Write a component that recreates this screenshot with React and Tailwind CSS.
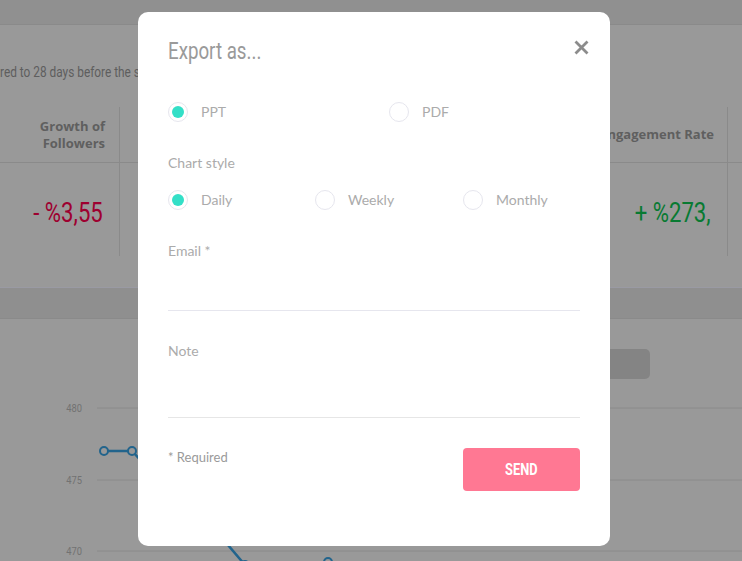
import React from "react";

function Radio({ checked, label, width }) {
  return (
    <div className="flex items-center h-[20px]" style={{ width }}>
      <span className="flex h-[20px] w-[20px] shrink-0 items-center justify-center rounded-full border border-[#e6e6ee] bg-white">
        {checked && <span className="h-[12px] w-[12px] rounded-full bg-[#33dfc7]" />}
      </span>
      <span className="ml-[13px] text-[14px] leading-[20px] text-[#ababab]">{label}</span>
    </div>
  );
}

export default function App() {
  const cond = "font-['Roboto',sans-serif]";
  const head = "font-['Open_Sans',sans-serif]";
  const pts = [
    [104, 72], [132, 72], [160, 102], [188, 128], [216, 152], [245, 186], [272, 196], [300, 192], [328, 183], [356, 200], [384, 215],
  ];
  const d = pts.map((p, i) => (i ? "L" : "M") + p[0] + " " + p[1]).join(" ");
  return (
    <div className="relative h-[561px] w-[742px] overflow-hidden bg-[#999999] font-['Lato',sans-serif]">
      {/* top bar */}
      <div className="h-[25px] border-b border-[#8a8a8a] bg-[#909090]" />
      {/* subtitle */}
      <div className={`mt-[38px] h-[18px] whitespace-nowrap text-[15px] leading-[18px] text-[#5e5e5e] ${cond}`}>
        <span className="inline-block origin-left scale-x-[0.79]">red to 28 days before the selected period</span>
      </div>
      {/* table */}
      <div className="mt-[26px] flex">
        <div className="w-[120px] border-r border-[#8a8a8a]">
          <div className={`flex h-[56px] items-center justify-end border-b border-[#8a8a8a] pr-[14px] text-right text-[13px] font-bold leading-[17px] text-[#5f5f5f] ${head}`}>
            Growth of<br />Followers
          </div>
          <div className={`flex h-[93px] items-center justify-end pr-[16px] pt-[7px] text-[27px] text-[#9e0030] ${cond}`}>
            <span className="inline-block origin-right scale-x-[0.82] whitespace-nowrap">- %3,55</span>
          </div>
        </div>
        {["Reach", "Impressions", "Engagement"].map((h) => (
          <div key={h} className="w-[152px] border-r border-[#8a8a8a]">
            <div className={`flex h-[56px] items-center justify-end border-b border-[#8a8a8a] pr-[14px] text-[13px] font-bold text-[#5f5f5f] ${head}`}>{h}</div>
            <div className="h-[93px]" />
          </div>
        ))}
        <div className="w-[152px] border-r border-[#8a8a8a]">
          <div className={`flex h-[56px] items-center justify-end whitespace-nowrap border-b border-[#8a8a8a] pr-[13px] text-[13px] font-bold text-[#5f5f5f] ${head}`}>
            Engagement Rate
          </div>
          <div className={`flex h-[93px] items-center justify-end pr-[16px] pt-[7px] text-[27px] text-[#087a32] ${cond}`}>
            <span className="inline-block origin-right scale-x-[0.82] whitespace-nowrap">+ %273,</span>
          </div>
        </div>
        <div className="flex-1">
          <div className="h-[56px] border-b border-[#8a8a8a]" />
        </div>
      </div>
      {/* band */}
      <div className="mt-[31px] h-[32px] border-y border-t-[#9a9aa3] border-b-[#8a8a8a] bg-[#8f8f8f]" />
      {/* toolbar */}
      <div className="flex justify-end pr-[92px] pt-[30px]">
        <div className="h-[30px] w-[130px] rounded-[5px] bg-[#848484]" />
      </div>
      {/* chart */}
      <svg width="742" height="183" className="block">
        {[[29, "480"], [101, "475"], [172, "470"]].map(([y, t]) => (
          <g key={t}>
            <line x1="97" x2="742" y1={y} y2={y} stroke="#8a8a8a" strokeWidth="1" />
            <text x="82" y={y + 4} textAnchor="end" fontSize="11" fill="#727272" fontFamily="Roboto, sans-serif" transform={`translate(${82 * 0.15} 0) scale(0.85 1)`}>{t}</text>
          </g>
        ))}
        <path d={d} fill="none" stroke="#22648c" strokeWidth="2.5" />
        {pts.map(([x, y], i) => (
          <circle key={i} cx={x} cy={y} r="4" fill="#999999" stroke="#22648c" strokeWidth="2" />
        ))}
      </svg>

      {/* modal overlay */}
      <div className="absolute inset-0 flex justify-center pl-[6px] pt-[12px]">
        <div className="relative flex h-[534px] w-[472px] flex-col rounded-[10px] bg-white px-[30px] pt-[27px]">
          <div className={`h-[24px] text-[24px] leading-[24px] text-[#9a9a9a] ${cond}`}>
            <span className="inline-block origin-left scale-x-[0.78] whitespace-nowrap">Export as...</span>
          </div>
          <button className="absolute right-[21px] top-[28px] h-[15px] w-[15px]">
            <svg viewBox="0 0 15 15" width="15" height="15">
              <path d="M1.5 1.5 L13.5 13.5 M13.5 1.5 L1.5 13.5" stroke="#8c8c8c" strokeWidth="2.8" />
            </svg>
          </button>
          <div className="mt-[39px] flex">
            <Radio checked label="PPT" width={221} />
            <Radio label="PDF" width={150} />
          </div>
          <div className="mt-[31px] h-[20px] text-[14px] leading-[20px] text-[#ababab]">Chart style</div>
          <div className="mt-[17px] flex">
            <Radio checked label="Daily" width={147} />
            <Radio label="Weekly" width={148} />
            <Radio label="Monthly" width={117} />
          </div>
          <div className="mt-[31px] h-[20px] text-[14px] leading-[20px] text-[#ababab]">Email *</div>
          <div className="h-[50px] border-b border-[#e6e6ee]" />
          <div className="mt-[30px] h-[20px] text-[14px] leading-[20px] text-[#ababab]">Note</div>
          <div className="h-[57px] border-b border-[#e6e6e6]" />
          <div className="mt-[30px] flex items-start justify-between">
            <div className="mt-[-1px] text-[13px] leading-[20px] text-[#9a9a9a]">* Required</div>
            <button className={`flex h-[43px] w-[117px] items-center justify-center rounded-[4px] bg-[#ff7893] text-[16px] font-bold text-white ${cond}`}>
              <span className="inline-block scale-x-[0.8]">SEND</span>
            </button>
          </div>
        </div>
      </div>
    </div>
  );
}
